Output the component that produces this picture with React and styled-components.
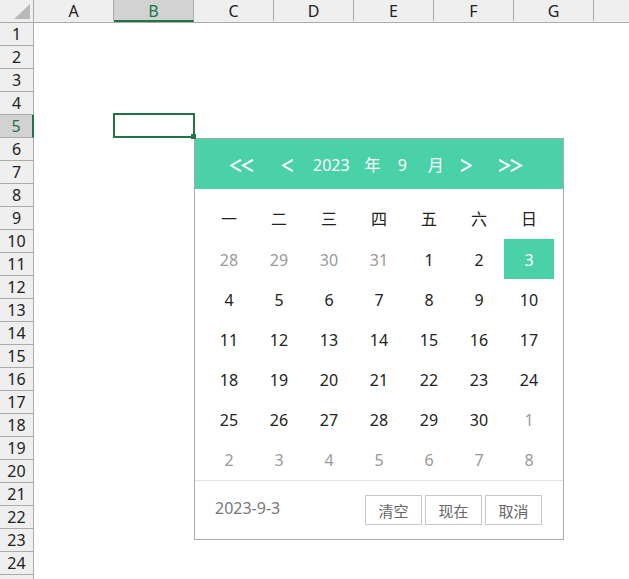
import React from 'react';
import styled, { createGlobalStyle } from 'styled-components';

const GREEN = '#4bd1a8';
const EXCEL = '#217346';

const GlobalStyle = createGlobalStyle`
  html, body {
    margin: 0;
    padding: 0;
    background: #fff;
    overflow: hidden;
  }
  body {
    font-family: "Noto Sans", "Noto Sans CJK SC", sans-serif;
  }
  * {
    box-sizing: border-box;
  }
`;

const Sheet = styled.div`
  display: grid;
  grid-template-columns: 34px 1fr;
  grid-template-rows: 23px 1fr;
  width: 629px;
  height: 579px;
  overflow: hidden;
`;

const Corner = styled.div`
  background: #efefef;
  border-right: 1px solid #ababab;
  border-bottom: 1px solid #ababab;
  display: flex;
  align-items: flex-end;
  justify-content: flex-end;
  padding: 0 3px 3px 0;
`;

const ColHeaders = styled.div`
  display: flex;
  background: #efefef;
  border-bottom: 1px solid #ababab;
`;

const ColHead = styled.div`
  flex: 0 0 80px;
  height: 22px;
  display: flex;
  align-items: center;
  justify-content: center;
  border-right: 1px solid #ababab;
  font-size: 16px;
  color: ${(p) => (p.$active ? EXCEL : '#222')};
  background: ${(p) => (p.$active ? '#d2d2d2' : 'transparent')};
  border-bottom: 2px solid ${(p) => (p.$active ? EXCEL : 'transparent')};
  padding-top: 2px;
`;

const RowHeaders = styled.div`
  display: flex;
  flex-direction: column;
  background: #efefef;
`;

const RowHead = styled.div`
  flex: 0 0 23px;
  display: flex;
  align-items: center;
  justify-content: center;
  border-bottom: 1px solid #ababab;
  border-right: ${(p) => (p.$active ? `2px solid ${EXCEL}` : '1px solid #ababab')};
  background: ${(p) => (p.$active ? '#d2d2d2' : 'transparent')};
  color: ${(p) => (p.$active ? EXCEL : '#222')};
  font-size: 16px;
`;

const Body = styled.div`
  display: grid;
  grid-template-columns: repeat(8, 80px);
  grid-template-rows: repeat(25, 23px);
  background: #fff;
`;

const Selection = styled.div`
  grid-column: 2;
  grid-row: 5;
  margin: -2px -1px 0 -1px;
  border: 2px solid ${EXCEL};
  position: relative;
`;

const Handle = styled.div`
  position: absolute;
  left: 76px;
  top: 19px;
  width: 5px;
  height: 5px;
  background: ${EXCEL};
  z-index: 2;
`;

const Popup = styled.div`
  position: absolute;
  left: 79px;
  top: 23px;
  width: 370px;
  background: #fff;
  border: 1px solid #aaa;
  z-index: 1;
`;

const CalHeader = styled.div`
  height: 50px;
  background: ${GREEN};
  color: #fff;
  display: flex;
  align-items: center;
  padding: 2px 0 0 35px;
  font-size: 16px;
`;

const HeadItem = styled.span`
  display: flex;
  align-items: center;
  margin-left: ${(p) => p.$ml || 0}px;
  line-height: 1;
`;

const CalBody = styled.div`
  padding: 10px 9px 1px;
`;

const DayGrid = styled.div`
  display: grid;
  grid-template-columns: repeat(7, 50px);
  grid-auto-rows: 40px;
`;

const WeekDay = styled.div`
  display: flex;
  align-items: center;
  justify-content: center;
  font-size: 16px;
  color: #222;
  padding-bottom: 3px;
`;

const Day = styled.div`
  display: flex;
  align-items: center;
  justify-content: center;
  font-size: 16px;
  padding-top: 2px;
  color: ${(p) => (p.$selected ? '#fff' : p.$muted ? '#999' : '#222')};
  background: ${(p) => (p.$selected ? GREEN : 'transparent')};
`;

const Footer = styled.div`
  height: 59px;
  border-top: 1px solid #e2e2e2;
  display: flex;
  align-items: center;
  padding: 0 21px 0 20px;
`;

const Value = styled.span`
  flex: 1;
  font-size: 16px;
  color: #777;
  margin-top: -4px;
`;

const Buttons = styled.div`
  display: flex;
  gap: 3px;
`;

const Button = styled.button`
  width: 57px;
  height: 30px;
  padding: 0;
  border: 1px solid #c8c8c8;
  background: #fff;
  color: #666;
  font-family: "Noto Sans CJK SC", sans-serif;
  font-size: 15px;
  letter-spacing: 0;
`;

const Chevron = ({ dir = 'left', double = false }) => {
  const w = double ? 24 : 11;
  const pts = (x) =>
    dir === 'left'
      ? `${x + 11},0.8 ${x + 1},6.5 ${x + 11},12.2`
      : `${x},0.8 ${x + 10},6.5 ${x},12.2`;
  return (
    <svg width={w} height="13" viewBox={`0 0 ${w} 13`} fill="none" stroke="#fff" strokeWidth="2">
      <polyline points={pts(0)} />
      {double && <polyline points={pts(12)} />}
    </svg>
  );
};

const cols = ['A', 'B', 'C', 'D', 'E', 'F', 'G', ''];
const rows = Array.from({ length: 25 }, (_, i) => i + 1);
const weekDays = ['一', '二', '三', '四', '五', '六', '日'];

const buildDays = () => {
  const list = [28, 29, 30, 31].map((d) => ({ d, muted: true }));
  for (let d = 1; d <= 30; d++) list.push({ d, selected: d === 3 });
  for (let d = 1; d <= 8; d++) list.push({ d, muted: true });
  return list;
};

const days = buildDays();

const DatePicker = () => (
  <Popup>
    <CalHeader>
      <HeadItem>
        <Chevron dir="left" double />
      </HeadItem>
      <HeadItem $ml={28}>
        <Chevron dir="left" />
      </HeadItem>
      <HeadItem $ml={20}>2023</HeadItem>
      <HeadItem $ml={15}>年</HeadItem>
      <HeadItem $ml={17}>9</HeadItem>
      <HeadItem $ml={21}>月</HeadItem>
      <HeadItem $ml={17}>
        <Chevron dir="right" />
      </HeadItem>
      <HeadItem $ml={27}>
        <Chevron dir="right" double />
      </HeadItem>
    </CalHeader>
    <CalBody>
      <DayGrid>
        {weekDays.map((w) => (
          <WeekDay key={w}>{w}</WeekDay>
        ))}
        {days.map((item, i) => (
          <Day key={i} $muted={item.muted} $selected={item.selected}>
            {item.d}
          </Day>
        ))}
      </DayGrid>
    </CalBody>
    <Footer>
      <Value>2023-9-3</Value>
      <Buttons>
        <Button>清空</Button>
        <Button>现在</Button>
        <Button>取消</Button>
      </Buttons>
    </Footer>
  </Popup>
);

export default function App() {
  return (
    <>
      <GlobalStyle />
      <Sheet>
        <Corner>
          <svg width="16" height="15" viewBox="0 0 16 15">
            <polygon points="16,0 16,15 0,15" fill="#b9b9b9" />
          </svg>
        </Corner>
        <ColHeaders>
          {cols.map((c, i) => (
            <ColHead key={i} $active={c === 'B'}>
              {c}
            </ColHead>
          ))}
        </ColHeaders>
        <RowHeaders>
          {rows.map((r) => (
            <RowHead key={r} $active={r === 5}>
              {r < 25 ? r : ''}
            </RowHead>
          ))}
        </RowHeaders>
        <Body>
          <Selection>
            <Handle />
            <DatePicker />
          </Selection>
        </Body>
      </Sheet>
    </>
  );
}
